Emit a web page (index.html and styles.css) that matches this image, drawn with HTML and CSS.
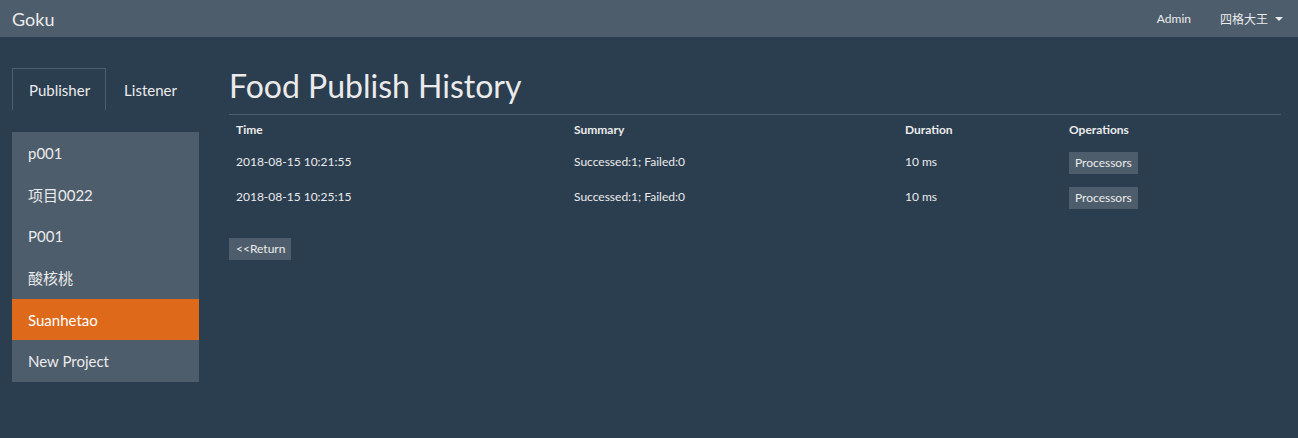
FILE: index.html
```html
<!DOCTYPE html>
<html>
<head>
<meta charset="utf-8">
<link rel="stylesheet" href="styles.css">
</head>
<body>
<nav class="navbar">
  <span class="brand">Goku</span>
  <div class="nav-right">
    <span class="nav-link">Admin</span>
    <span class="nav-link user">四格大王 <span class="caret"></span></span>
  </div>
</nav>
<div class="page">
  <aside class="sidebar">
    <div class="tabs">
      <span class="tab active">Publisher</span>
      <span class="tab">Listener</span>
    </div>
    <ul class="list">
      <li class="item">p001</li>
      <li class="item">项目0022</li>
      <li class="item">P001</li>
      <li class="item">酸核桃</li>
      <li class="item active">Suanhetao</li>
      <li class="item">New Project</li>
    </ul>
  </aside>
  <main class="main">
    <h1 class="title">Food Publish History</h1>
    <table class="table">
      <thead>
        <tr><th class="c1">Time</th><th class="c2">Summary</th><th class="c3">Duration</th><th>Operations</th></tr>
      </thead>
      <tbody>
        <tr><td>2018-08-15 10:21:55</td><td>Successed:1; Failed:0</td><td>10 ms</td><td><span class="btn">Processors</span></td></tr>
        <tr><td>2018-08-15 10:25:15</td><td>Successed:1; Failed:0</td><td>10 ms</td><td><span class="btn">Processors</span></td></tr>
      </tbody>
    </table>
    <span class="btn ret">&lt;&lt;Return</span>
  </main>
</div>
</body>
</html>
```
FILE: styles.css
```css
* { box-sizing: border-box; }
html, body { margin: 0; padding: 0; }
body {
  background: #2b3e50;
  color: #ebebeb;
  font-family: Lato, "Noto Sans CJK SC", sans-serif;
  font-size: 15px;
  height: 438px;
  overflow: hidden;
}
.navbar {
  height: 37px;
  background: #4e5d6c;
  display: flex;
  align-items: center;
  justify-content: space-between;
  padding: 0 15px 0 12px;
}
.brand { font-size: 18px; color: #ebebeb; }
.nav-right { display: flex; align-items: center; gap: 29px; font-size: 12px; }
.nav-link { color: #ebebeb; display: flex; align-items: center; }
.caret {
  display: inline-block;
  width: 0; height: 0;
  border-left: 4px solid transparent;
  border-right: 4px solid transparent;
  border-top: 4px solid #ebebeb;
  margin-left: 7px;
}
.page {
  display: flex;
  padding: 31px 17px 0 12px;
  gap: 30px;
}
.sidebar { width: 187px; flex: none; }
.tabs { display: flex; height: 42px; }
.tab {
  padding: 0 15px 0 16px;
  line-height: 42px;
  border: 1px solid transparent;
  border-bottom: none;
}
.tab + .tab { padding-left: 17px; }
.tab.active { border-color: #4e5d6c; }
.list { list-style: none; margin: 22px 0 0; padding: 0; background: #4e5d6c; }
.item { height: 41.67px; line-height: 42px; padding: 0 16px; }
.item.active { background: #df691a; color: #fff; }
.main { flex: 1; }
.title {
  margin: 0;
  font-weight: 400;
  font-size: 32px;
  line-height: 36px;
  padding-top: 0;
  padding-bottom: 10px;
  border-bottom: 1px solid #4e5d6c;
}
.table { width: 100%; border-collapse: collapse; font-size: 12px; margin-top: 7px; }
.table th { text-align: left; font-weight: 700; padding: 0 7px 6px; line-height: 16px; }
.table td { padding: 4px 7px; height: 35px; line-height: 16px; vertical-align: middle; }
.c1 { width: 338px; }
.c2 { width: 331px; }
.c3 { width: 164px; }
.btn {
  display: inline-block;
  background: #4e5d6c;
  color: #ebebeb;
  font-size: 12px;
  padding: 0 6px;
  line-height: 22px;
}
.table .btn { margin-top: 3px; }
.ret { margin-top: 24px; padding: 0 6px 0 7px; }
```
